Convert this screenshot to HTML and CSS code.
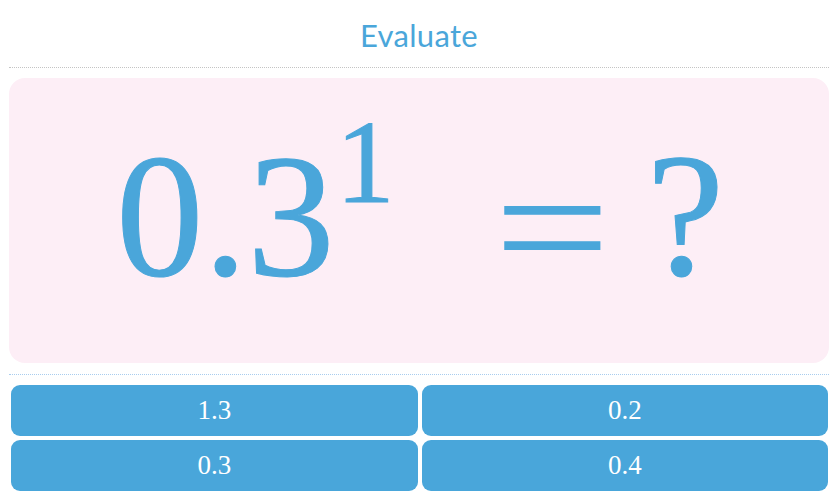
FILE: index.html
```html
<!DOCTYPE html>
<html lang="en">
<head>
<meta charset="utf-8">
<title>Evaluate</title>
<link rel="stylesheet" href="styles.css">
</head>
<body>
<main class="quiz">
  <header class="quiz-header">
    <h1 class="quiz-title">Evaluate</h1>
  </header>
  <section class="question">
    <div class="math">
      <span class="base">0.3</span><span class="power">1</span><span class="equals">=</span><span class="unknown">?</span>
    </div>
  </section>
  <div class="answers">
    <button class="answer">1.3</button>
    <button class="answer">0.2</button>
    <button class="answer">0.3</button>
    <button class="answer">0.4</button>
  </div>
</main>
</body>
</html>
```

FILE: styles.css
```css
html, body {
  margin: 0;
  padding: 0;
  background: #ffffff;
}

.quiz {
  width: 820px;
  margin-left: 9px;
  display: flex;
  flex-direction: column;
}

.quiz-header {
  height: 67px;
  border-bottom: 1px dotted #c4c4c4;
  display: flex;
  justify-content: center;
}

.quiz-title {
  margin: 0;
  padding-top: 15px;
  font-family: "Lato", "Open Sans", sans-serif;
  font-weight: 400;
  font-size: 31px;
  letter-spacing: 0.3px;
  line-height: 40px;
  color: #4aa6da;
}

.question {
  margin-top: 10px;
  height: 285px;
  background: #fdeef6;
  border-radius: 16px;
  position: relative;
}

/* thin separator between the question card and the answers */
.question::after {
  content: "";
  position: absolute;
  left: 0;
  right: 0;
  bottom: -12px;
  border-bottom: 1px dotted #a9cdee;
}

.math {
  display: flex;
  justify-content: center;
  align-items: baseline;
  padding-top: 38px;
  font-family: "Liberation Serif", "Times New Roman", serif;
  color: #4aa6da;
  line-height: 200px;
}

.base,
.power,
.unknown {
  -webkit-text-stroke: 1px #4aa6da;
}

.base {
  font-size: 175px;
  margin-left: 2px;
}

.power {
  font-size: 118px;
  position: relative;
  top: -73px;
  margin-left: 1px;
}

.equals {
  font-size: 175px;
  display: inline-block;
  margin-left: 108px;
  position: relative;
  top: 11px;
  transform: scaleX(1.18);
}

.unknown {
  font-size: 175px;
  margin-left: 45px;
}

.answers {
  margin: 22px 1px 0 2px;
  display: grid;
  grid-template-columns: 1fr 1fr;
  gap: 4px 4px;
}

.answer {
  height: 51px;
  border: 0;
  border-radius: 9px;
  background: #49a6da;
  color: #ffffff;
  font-family: "Liberation Serif", "Times New Roman", serif;
  font-size: 27px;
  padding: 0;
  cursor: pointer;
}
```
